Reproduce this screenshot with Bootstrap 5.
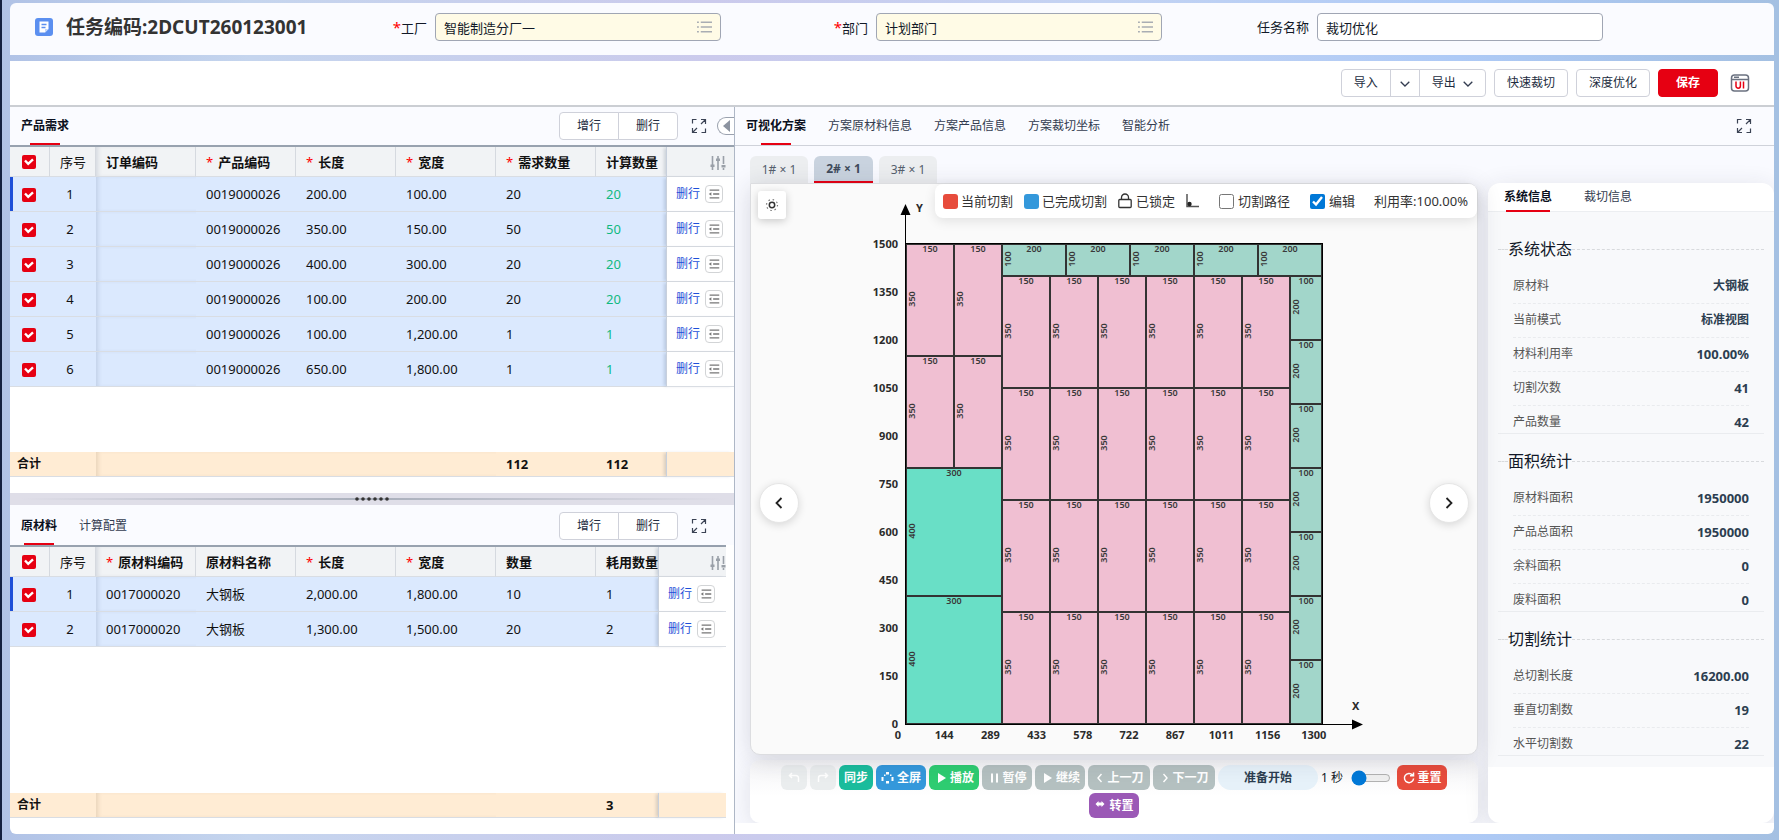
<!DOCTYPE html>
<html lang="zh-CN">
<head>
<meta charset="utf-8">
<meta name="viewport" content="width=device-width, initial-scale=1">
<title>任务编码:2DCUT260123001</title>
<link rel="stylesheet" href="https://cdn.jsdelivr.net/npm/bootstrap@5.3.0/dist/css/bootstrap.min.css">
<style>
:root{--red:#e60012;--line:#d3d6de;--ink:#111827;--panel:#fafbff}
body{font-family:"Noto Sans","Noto Sans CJK SC",sans-serif;font-size:12px;line-height:18px;color:var(--ink);min-height:100vh;border-left:2px solid #14203f;
 background:linear-gradient(90deg,#b0c2e6 0,#c5d5ee 14%,#cbcaec 40%,#c3d3f3 62%,#aecaf6 82%,#a4c0e2 100%)}
.shell{padding:3px 5px 6px 8px;gap:6px;min-height:100vh}
.head-card{background:var(--panel);border-radius:6px 6px 0 0;display:grid;grid-template-columns:341px repeat(3,25%);padding:10px 0 14px}
.head-title{font-size:19px;line-height:28px;font-weight:700;color:#333;padding-left:25px;gap:13px}
.field-label{width:76px;font-size:13px;text-align:right}
.field-label i{color:red;font-style:normal;font-size:15px}
.field-box{width:286px}
.field-box .form-control{height:28px;padding:0 8px;font-size:13px;border:1px solid #a0a6b4;border-radius:4px;color:var(--ink)}
.field-box .picker{background:#fffbe6}
.field-box svg{position:absolute;right:9px;top:8px}
.main-card{background:#fff;border-radius:0 0 6px 6px;min-width:0}
.toolbar{height:46px;padding:0 24px;gap:8px;border-bottom:2px solid #cbced3}
.tool-btn{height:28px;padding:0 12px;font-size:12px;line-height:18px;border:1px solid #cfd1da;border-radius:4px;background:#fff;color:#222c40}
.tool-btn:hover{background:#f5f6fa;color:#222c40}
.tool-btn.caret{padding:0 9px}
.tool-btn.save{background:var(--red);border-color:var(--red);color:#fff;font-weight:700;padding:0 17px}
.left-pane{flex:0 0 41.1%;border-right:1px solid #aeb7c6;min-width:0}
.tab-bar{height:38px;padding:0 11px;background:var(--panel);gap:22px}
.tab-bar a,.side-tabs a{color:#333c50;text-decoration:none;position:relative;line-height:34px}
.tab-bar a.on,.side-tabs a.on{color:#0b1020;font-weight:700}
.tab-bar a.on::after{content:"";position:absolute;left:50%;bottom:-2px;width:30px;margin-left:-15px;height:2px;background:var(--red)}
.tab-bar.tall{height:40px;padding-top:1px}
.row-btns .tool-btn{width:60px;height:28px;padding:0}
.bare-btn{border:0;background:none;padding:0;line-height:0}
.zoom-btn{margin:0 16px 0 -9px}
.fold-btn{position:absolute;right:0;top:10px;width:17px;height:18px;border:1px solid #9aa1ae;border-right:0;border-radius:9px 0 0 9px;background:#fff;padding:0;line-height:0}
.grid-wrap{border-top:2px solid #98a2af}
.grid{table-layout:fixed;width:100%;border-collapse:separate;border-spacing:0;font-size:13px;margin:0;color:#111}
.grid th,.grid td{padding:0 0 0 10px;border-bottom:1px solid #d9dde3;white-space:nowrap;overflow:hidden}
.grid th{height:30px;background:#f1f3f5;border-right:1px solid #d5d9df;font-weight:700}
.grid th:nth-child(2){font-weight:400}
.grid th:nth-last-child(-n+2){border-right:0}
.grid td{height:35px;background:#dbe9fe}
.grid tr>:nth-child(1){padding:0;text-align:center}
.grid td:nth-child(2){padding:0 6px 0 0;text-align:center}
.grid tr>:nth-child(3){box-shadow:inset 4px 0 4px -2px rgba(60,80,110,.16)}
.grid tr>:last-child{border-left:1px solid #c8d0dc;box-shadow:-3px 0 3px -1px rgba(60,80,110,.2)}
.grid td:last-child{background:#fff;padding-left:9px;font-size:12px}
.grid tbody tr:first-child td:first-child{box-shadow:inset 3px 0 #1d4fd8}
.grid th i{color:red;font-style:normal;font-weight:400;margin-right:5px}
.grid .form-check-input{width:14px;height:14px;margin:-2px 2px 0 0;border-radius:2px;border:0;background-color:var(--red);vertical-align:middle;
 background-size:14px;background-image:url("data:image/svg+xml,%3csvg xmlns='http://www.w3.org/2000/svg' viewBox='0 0 14 14'%3e%3cpath fill='none' stroke='%23fff' stroke-width='2.4' d='M3 5.5l3.2 3.3L11 4.4'/%3e%3c/svg%3e")}
.grid .calc{color:#10b981}
.del-link{color:#1d4fd8;text-decoration:none;margin-right:2px}
.more-btn{width:18px;height:18px;border:1px solid #d2d4d6;border-radius:4px;background:#fff;padding:0;line-height:0;vertical-align:middle}
.sum td,.sum tbody tr:first-child td:first-child{height:25px;background:#ffecd4;font-weight:700}
.sum tbody tr:first-child td:first-child{text-align:left;padding-left:7px;font-size:12px;box-shadow:none}
.sum tr>:nth-child(2){box-shadow:inset 4px 0 4px -2px rgba(110,90,50,.16)}
.sum tr>:nth-child(3){box-shadow:none}
.sum td:last-child{background:#ffecd4}
.upper{height:332px}
.split{height:12px;margin-top:16px;background:#dfdee8;position:relative}
.split::before{content:"";position:absolute;left:10px;right:10px;top:5px;height:2px;background:linear-gradient(90deg,transparent,#a9afbb 50%,transparent)}
.split svg{position:absolute;left:50%;top:3px;margin-left:-18px}
.lower{padding-right:8px}
.right-pane{min-width:0}
.right-pane .tab-bar{padding:0 22px 0 11px;height:39px;border-bottom:1px solid #cfd2da}
.stage{padding:10px 0 0 15px;gap:10px;background:#f9faff;overflow:hidden;margin-bottom:11px}
.sheet-tabs{gap:6px;height:27px}
.sheet-tabs button{border:0;width:58px;height:27px;border-radius:6px 6px 0 0;background:#eceef0;color:#555f6d;font-size:12px;padding:0}
.sheet-tabs button.on{background:#c9d3df;color:#3f4b5c;font-weight:700;border-bottom:2px solid var(--red);width:59px}
.board{background:#fafafa;border:1px solid #dcdde0;border-radius:0 10px 10px 10px;box-shadow:0 4px 24px rgba(40,40,60,.16);position:relative}
.legend{position:absolute;right:0;top:0;height:34px;border-radius:8px;background:#fff;padding:0 9px 0 8px;font-size:13px;color:#333;box-shadow:0 3px 12px rgba(0,0,0,.1);white-space:nowrap}
.legend .sw{width:15px;height:15px;border-radius:3px;margin-right:3px}
.legend .item{margin-right:11px}
.legend input{width:15px;height:15px;margin:0 4px 0 20px;accent-color:#0078d7}
.legend .rate{margin-left:19px}
.gear-btn{position:absolute;left:7px;top:7px;width:28px;height:28px;border:0;border-radius:3px;background:#fff;box-shadow:0 2px 8px rgba(0,0,0,.2);padding:0;line-height:0}
.turn{position:absolute;top:50%;margin-top:14px;width:40px;height:40px;border:1px solid #e6e6e6;border-radius:50%;background:#fff;box-shadow:0 2px 8px rgba(0,0,0,.14);padding:0;line-height:0}
.turn.prev{left:8px}
.turn.next{right:8px}
.plan{display:block;margin:0 auto;max-width:100%}
.plan .tick{font-size:11px;font-weight:700;fill:#2b2b2b}
.plan .dim{font-size:9px;font-weight:600;fill:#3a3a3a;text-anchor:middle}
.controls{margin-top:5px;background:linear-gradient(#f4f4f6,#fff 36px);border-radius:10px;padding:5px 8px;gap:3px;box-shadow:0 4px 24px rgba(40,40,60,.12)}
.ctl{height:25px;min-width:50px;border:0;border-radius:6px;padding:0 5px;color:#fff;font-size:12px;font-weight:700;gap:3px;background:#b4c0c0}
.ctl.ghost{min-width:26px;width:26px;background:#eaedee}
.ctl.sync{min-width:34px;background:#1abc9c}
.ctl.full{background:#3498db}
.ctl.play{background:#2ecc71}
.ctl.reset{background:#e74c3c}
.ctl.swap{background:#9b59b6}
.ctl.step{width:62px}
.status{width:100px;height:25px;border-radius:13px;background:#e6f1f9;color:#2c3e50;font-weight:700}
.controls input[type=range]{width:40px;height:16px;margin:0 3px 0 5px;accent-color:#0078d7}
.side{width:286px;flex:none;margin-top:27px;background:#fff;border-radius:12px;box-shadow:0 4px 24px rgba(40,40,60,.12);overflow:hidden}
.side-tabs{height:29px;padding:0 16px;gap:32px;border-bottom:1px solid #eceef1}
.side-tabs a{line-height:28px}
.side-tabs a.on::after{content:"";position:absolute;left:2px;right:2px;bottom:-1px;height:2px;background:var(--red)}
.facts{background:#f8f9fb;padding:10px 10px 11px}
.facts section{border-bottom:1px solid #eaecef}
.facts h2{font-size:16px;line-height:24px;font-weight:400;margin:0;padding:15px 0 9px;white-space:nowrap}
.facts h2::before,.facts h2::after{content:"";border-top:1px dashed #d8dadd;width:10px}
.facts h2::after{flex:1}
.facts dl{margin:0}
.facts dl>div{height:34px;margin:0 15px;padding-top:7px;border-bottom:1px dashed #e9ebee}
.facts dl>div:last-child{height:27px;border:0}
.facts dt{font-weight:400;color:#555}
.facts dd{margin:0;font-weight:700;color:#2c3e50}
.facts .num{font-size:13px}
</style>
</head>
<body>
<svg width="0" height="0" class="position-absolute" aria-hidden="true">
 <symbol id="i-list" viewBox="0 0 16 12"><path d="M0 1h2M4 1h12M0 6h2M4 6h12M0 11h2M4 11h12" stroke="#a9adb3" stroke-width="1.6"/></symbol>
 <symbol id="i-expand" viewBox="0 0 16 16"><path d="M1.500 5.500V1.500h4M14.500 10.500v4h-4M10 1.500h4.500V6M14.500 1.500l-4.500 4.500M6 14.500H1.500V10M1.500 14.500L6 10" fill="none" stroke="#3b4354" stroke-width="1.200"/></symbol>
 <symbol id="i-down" viewBox="0 0 10 6"><path d="M.7.7L5 5 9.300.7" fill="none" stroke="#333c50" stroke-width="1.300"/></symbol>
 <symbol id="i-tune" viewBox="0 0 16 14"><path d="M2.500 0v14M8 0v14M13.500 0v8M13.500 12v2" stroke="#9aa0a8" stroke-width="1.600"/><path d="M.5 8.500h4v2.500h-4zM6 2.500h4V5H6zM11.500 9h4v2.500h-4z" fill="#9aa0a8"/></symbol>
 <symbol id="i-more" viewBox="0 0 16 16"><path d="M3 3.500h11M7 8h7M3 12.500h11" stroke="#777" stroke-width="1.500"/><path d="M2 8l3-2v4z" fill="#777"/></symbol>
</svg>
<div class="shell d-flex flex-column">
 <header class="head-card">
  <h1 class="head-title d-flex align-items-center m-0 text-nowrap">
   <svg width="18" height="18" viewBox="0 0 18 18" class="flex-shrink-0"><rect width="18" height="18" rx="3" fill="#5b8ff0"/><path d="M4.500 3.500h9v7.500l-3.500 3.500H4.500z" fill="#fff"/><path d="M6.500 6.500h5M6.500 9.500h4" stroke="#5b8ff0" stroke-width="1.300"/><path d="M13.500 11H10v3.500" fill="#c5d8fb"/></svg>
   <span>任务编码:2DCUT260123001</span></h1>
  <div class="d-flex align-items-center"><label class="field-label me-2" for="plant"><i>*</i>工厂</label><div class="field-box position-relative"><input id="plant" class="form-control picker" value="智能制造分厂一"><svg width="15" height="12"><use href="#i-list"/></svg></div></div>
  <div class="d-flex align-items-center"><label class="field-label me-2" for="dept"><i>*</i>部门</label><div class="field-box position-relative"><input id="dept" class="form-control picker" value="计划部门"><svg width="15" height="12"><use href="#i-list"/></svg></div></div>
  <div class="d-flex align-items-center"><label class="field-label me-2" for="task">任务名称</label><div class="field-box"><input id="task" class="form-control" value="裁切优化"></div></div>
 </header>

 <main class="main-card d-flex flex-column flex-grow-1">
  <div class="toolbar d-flex align-items-center justify-content-end">
   <div class="btn-group">
    <button class="btn tool-btn">导入</button>
    <button class="btn tool-btn caret" aria-label="导入选项"><svg width="10" height="6"><use href="#i-down"/></svg></button>
    <button class="btn tool-btn">导出 <svg class="ms-1" width="10" height="6"><use href="#i-down"/></svg></button>
   </div>
   <button class="btn tool-btn">快速裁切</button>
   <button class="btn tool-btn">深度优化</button>
   <button class="btn tool-btn save">保存</button>
   <button class="bare-btn ms-1" aria-label="UI"><svg width="20" height="18" viewBox="0 0 20 18"><rect x="1.500" y="1" width="17" height="16" rx="3" fill="#fff" stroke="#6b7280" stroke-width="1.500"/><path d="M2 5.500h16M4 3.200h5" stroke="#6b7280" stroke-width="1.500"/><path d="M6 7.500v4.500a2.200 2.200 0 0 0 4.400 0V7.500M13.500 7.500v7" fill="none" stroke="#e60012" stroke-width="1.500"/></svg></button>
  </div>

  <div class="d-flex flex-grow-1">
   <section class="left-pane d-flex flex-column">
    <nav class="tab-bar d-flex align-items-center position-relative">
     <a href="#" class="on">产品需求</a>
     <div class="btn-group row-btns ms-auto"><button class="btn tool-btn">增行</button><button class="btn tool-btn">删行</button></div>
     <button class="bare-btn zoom-btn" aria-label="全屏"><svg width="16" height="16"><use href="#i-expand"/></svg></button>
     <button class="fold-btn" aria-label="收起"><svg width="10" height="12" viewBox="0 0 10 12"><path d="M9 0v12L2 6z" fill="#8c93a0"/></svg></button>
    </nav>
    <div class="grid-wrap upper d-flex flex-column">
     <table class="grid" id="products"></table>
     <table class="grid sum mt-auto"><colgroup><col style="width:86px"><col style="width:400px"><col style="width:100px"><col><col style="width:68px"></colgroup>
      <tbody><tr><td>合计</td><td></td><td>112</td><td>112</td><td></td></tr></tbody></table>
    </div>
    <div class="split"><svg width="36" height="6" viewBox="0 0 36 6" fill="#333"><circle cx="3" cy="3" r="1.800"/><circle cx="9" cy="3" r="1.800"/><circle cx="15" cy="3" r="1.800"/><circle cx="21" cy="3" r="1.800"/><circle cx="27" cy="3" r="1.800"/><circle cx="33" cy="3" r="1.800"/></svg></div>
    <nav class="tab-bar tall d-flex align-items-center">
     <a href="#" class="on">原材料</a><a href="#">计算配置</a>
     <div class="btn-group row-btns ms-auto"><button class="btn tool-btn">增行</button><button class="btn tool-btn">删行</button></div>
     <button class="bare-btn zoom-btn" aria-label="全屏"><svg width="16" height="16"><use href="#i-expand"/></svg></button>
    </nav>
    <div class="lower flex-grow-1 d-flex flex-column pb-3">
     <div class="grid-wrap flex-grow-1 d-flex flex-column">
      <table class="grid" id="materials"></table>
      <table class="grid sum mt-auto"><colgroup><col style="width:86px"><col style="width:400px"><col style="width:100px"><col><col style="width:68px"></colgroup>
       <tbody><tr><td>合计</td><td></td><td></td><td>3</td><td></td></tr></tbody></table>
     </div>
    </div>
   </section>

   <section class="right-pane flex-grow-1 d-flex flex-column">
    <nav class="tab-bar d-flex align-items-center">
     <a href="#" class="on">可视化方案</a><a href="#">方案原材料信息</a><a href="#">方案产品信息</a><a href="#">方案裁切坐标</a><a href="#">智能分析</a>
     <button class="bare-btn ms-auto" aria-label="全屏"><svg width="16" height="16"><use href="#i-expand"/></svg></button>
    </nav>
    <div class="stage d-flex flex-grow-1">
     <div class="flex-grow-1 d-flex flex-column">
      <div class="sheet-tabs d-flex"><button>1# × 1</button><button class="on">2# × 1</button><button>3# × 1</button></div>
      <div class="board">
       <svg class="plan" id="plan" width="560" height="570" viewBox="0 0 560 570" role="img" aria-label="裁切方案"></svg>
       <button class="gear-btn" aria-label="设置"><svg width="14" height="14" viewBox="0 0 14 14" fill="none" stroke="#333"><circle cx="7" cy="7" r="2.700" stroke-width="1.500"/><circle cx="7" cy="7" r="5.500" stroke="#777" stroke-width="1.200" stroke-dasharray="1.500 2.820"/></svg></button>
       <div class="legend d-flex align-items-center">
        <span class="sw" style="background:#e74c3c"></span><span class="item">当前切割</span>
        <span class="sw" style="background:#3498db"></span><span class="item">已完成切割</span>
        <svg class="me-1" width="14" height="16" viewBox="0 0 14 16" fill="none" stroke="#333" stroke-width="1.300"><rect x=".8" y="6.500" width="12.400" height="8" rx="1"/><path d="M3.500 6.500V4.500a3.500 3.500 0 0 1 7 0v2"/></svg><span class="item">已锁定</span>
        <svg width="13" height="14" viewBox="0 0 13 14"><path d="M1 0v12.500h12" fill="none" stroke="#555" stroke-width="1.500"/><circle cx="3.500" cy="10" r="2.200" fill="#222"/></svg>
        <input id="path" type="checkbox"><label for="path">切割路径</label>
        <input id="edit" type="checkbox" checked><label for="edit">编辑</label>
        <span class="rate">利用率:100.00%</span>
       </div>
       <button class="turn prev" aria-label="上一张"><svg width="8" height="12" viewBox="0 0 8 12"><path d="M6.500 1L1.500 6l5 5" fill="none" stroke="#222" stroke-width="1.800"/></svg></button>
       <button class="turn next" aria-label="下一张"><svg width="8" height="12" viewBox="0 0 8 12"><path d="M1.500 1l5 5-5 5" fill="none" stroke="#222" stroke-width="1.800"/></svg></button>
      </div>
      <div class="controls d-flex flex-wrap justify-content-center align-content-start flex-grow-1">
       <button class="ctl ghost" aria-label="撤销"><svg width="12" height="12" viewBox="0 0 12 12"><path d="M4 1L1.500 3.500 4 6M2 3.500h6a2.500 2.500 0 0 1 2.500 2.500v4" fill="none" stroke="#fff" stroke-width="1.500"/></svg></button>
       <button class="ctl ghost" aria-label="重做"><svg width="12" height="12" viewBox="0 0 12 12"><path d="M8 1l2.500 2.500L8 6M10 3.500H4A2.500 2.500 0 0 0 1.500 6v4" fill="none" stroke="#fff" stroke-width="1.500"/></svg></button>
       <button class="ctl sync">同步</button>
       <button class="ctl full d-flex align-items-center justify-content-center"><svg width="13" height="13" viewBox="0 0 13 13" fill="#fff"><path d="M5 1h3v2.500H5zM5 10h3v2.500H5zM.5 6h2v4h-2zM10.500 6h2v4h-2zM3 3.500h1.500V5H3zM9 3.500h1.500V5H9z"/></svg>全屏</button>
       <button class="ctl play d-flex align-items-center justify-content-center"><svg width="13" height="12" viewBox="0 0 13 12" fill="#fff"><path d="M4 1v10l8-5z"/></svg>播放</button>
       <button class="ctl d-flex align-items-center justify-content-center"><svg width="12" height="12" viewBox="0 0 12 12" fill="#fff"><path d="M3 1.500h2v9H3zM8 1.500h2v9H8z"/></svg>暂停</button>
       <button class="ctl d-flex align-items-center justify-content-center"><svg width="13" height="12" viewBox="0 0 13 12" fill="#fff"><path d="M4 1v10l8-5z"/></svg>继续</button>
       <button class="ctl step d-flex align-items-center justify-content-center"><svg width="10" height="10" viewBox="0 0 10 10"><path d="M6.500 1L3 5l3.500 4" fill="none" stroke="#fff" stroke-width="1.400"/></svg>上一刀</button>
       <button class="ctl step d-flex align-items-center justify-content-center"><svg width="10" height="10" viewBox="0 0 10 10"><path d="M3.500 1L7 5 3.500 9" fill="none" stroke="#fff" stroke-width="1.400"/></svg>下一刀</button>
       <span class="status d-flex align-items-center justify-content-center">准备开始</span>
       <label class="d-flex align-items-center text-nowrap" for="speed">1 秒</label><input id="speed" type="range" min="0" max="10" value="0" class="align-self-center">
       <button class="ctl reset d-flex align-items-center justify-content-center"><svg width="12" height="12" viewBox="0 0 12 12"><path d="M9.500 3A4.600 4.600 0 1 0 10.600 6.500M10.500.5v3.300H7" fill="none" stroke="#fff" stroke-width="1.500"/></svg>重置</button>
       <button class="ctl swap d-flex align-items-center justify-content-center"><svg width="12" height="12" viewBox="0 0 12 12" fill="#fff"><path d="M1.500 4L4.500 1v1.500h3V1l3 3-3 3V5.500h-3V7z"/></svg>转置</button>
      </div>
     </div>
     <aside class="side">
      <nav class="side-tabs d-flex"><a href="#" class="on">系统信息</a><a href="#">裁切信息</a></nav>
      <div class="facts" id="facts"></div>
     </aside>
    </div>
   </section>
  </div>
 </main>
</div>
<script src="https://cdn.jsdelivr.net/npm/bootstrap@5.3.0/dist/js/bootstrap.bundle.min.js"></script>
<script>
// Data grids: a leading * in a heading marks a required column
function grid(id, heads, rows, endPad, calcCol) {
  const cols = [40, 46, 100, 100, 100, 100, 100, 0, 68].map(w => w ? `<col style="width:${w}px">` : '<col>').join('');
  const th = heads.map(h => `<th scope="col">${h[0] === '*' ? '<i>*</i>' + h.slice(1) : h}</th>`).join('');
  const tr = rows.map((r, n) => `<tr><td><input class="form-check-input" type="checkbox" checked aria-label="选择第${n + 1}行"></td><td>${n + 1}</td>` +
    r.map((c, i) => `<td${i === calcCol ? ' class="calc"' : ''}>${c}</td>`).join('') +
    '<td><a class="del-link" href="#">删行</a> <button class="more-btn" aria-label="更多"><svg width="14" height="14"><use href="#i-more"/></svg></button></td></tr>').join('');
  document.getElementById(id).innerHTML = `<colgroup>${cols}</colgroup><thead><tr><th><input class="form-check-input" type="checkbox" checked aria-label="全选"></th>${th}` +
    `<th class="text-end ${endPad}"><button class="bare-btn" aria-label="列设置"><svg width="16" height="14"><use href="#i-tune"/></svg></button></th></tr></thead><tbody>${tr}</tbody>`;
}
const p = (l, w, q) => ['', '0019000026', l, w, q, q];
grid('products', ['序号', '订单编码', '*产品编码', '*长度', '*宽度', '*需求数量', '计算数量'],
  [p('200.00', '100.00', 20), p('350.00', '150.00', 50), p('400.00', '300.00', 20), p('100.00', '200.00', 20), p('100.00', '1,200.00', 1), p('650.00', '1,800.00', 1)], 'pe-2', 5);
grid('materials', ['序号', '*原材料编码', '原材料名称', '*长度', '*宽度', '数量', '耗用数量'],
  [['0017000020', '大钢板', '2,000.00', '1,800.00', 10, 1], ['0017000020', '大钢板', '1,300.00', '1,500.00', 20, 2]], 'pe-0');

// Statistics panel
document.getElementById('facts').innerHTML = [
  ['系统状态', [['原材料', '大钢板'], ['当前模式', '标准视图'], ['材料利用率', '100.00%'], ['切割次数', '41'], ['产品数量', '42']]],
  ['面积统计', [['原材料面积', '1950000'], ['产品总面积', '1950000'], ['余料面积', '0'], ['废料面积', '0']]],
  ['切割统计', [['总切割长度', '16200.00'], ['垂直切割数', '19'], ['水平切割数', '22']]]
].map(([t, rows]) => `<section><h2 class="d-flex align-items-center">${t}</h2><dl>` +
  rows.map(([k, v]) => `<div class="d-flex justify-content-between"><dt>${k}</dt><dd${/\d/.test(v) ? ' class="num"' : ''}>${v}</dd></div>`).join('') + '</dl></section>').join('');

// Cutting plan: sheet of 1300 x 1500, parts given by left edge and top edge
const S = 0.32, X0 = 72, Y0 = 540, pink = '#f0bfd2', green = '#a2d6ca', teal = '#69dfc6', parts = [];
for (const x of [0, 150]) for (const t of [1500, 1150]) parts.push([x, t, 150, 350, pink]);
for (const t of [800, 400]) parts.push([0, t, 300, 400, teal]);
for (let x = 300; x < 1300; x += 200) parts.push([x, 1500, 200, 100, green]);
for (const t of [1400, 1050, 700, 350]) for (let x = 300; x < 1200; x += 150) parts.push([x, t, 150, 350, pink]);
for (let t = 1400; t > 0; t -= 200) parts.push([1200, t, 100, 200, green]);
let g = '';
for (const [x, t, w, h, c] of parts) {
  const px = X0 + x * S, py = Y0 - t * S, pw = w * S, ph = h * S, cx = px + 6, cy = py + ph / 2 - 1;
  g += `<rect x="${px}" y="${py}" width="${pw}" height="${ph}" fill="${c}" stroke="#333" stroke-width="2"/>` +
    `<text class="dim" x="${px + pw / 2}" y="${py + 8}">${w}</text><text class="dim" transform="translate(${cx + 3} ${cy}) rotate(-90)">${h}</text>`;
}
g += `<rect x="${X0 - .5}" y="59.5" width="417" height="481" fill="none" stroke="#000"/><path d="M${X0 - .5} 540V28M${X0} 540.500H520" stroke="#000"/>` +
  '<path d="M66.500 31L71.500 20l5 11zM518 535.500l11 5-11 5z"/><text class="tick" x="82" y="28">Y</text><text class="tick" x="518" y="526">X</text>';
for (let i = 0; i <= 10; i++) g += `<text class="tick" text-anchor="end" x="64" y="${Y0 - i * 48 + 4}">${i * 150}</text>`;
[0, 144, 289, 433, 578, 722, 867, 1011, 1156, 1300].forEach((v, i) => g += `<text class="tick" text-anchor="middle" x="${64 + i * 46.2}" y="555">${v}</text>`);
document.getElementById('plan').innerHTML = g;
</script>
</body>
</html>
